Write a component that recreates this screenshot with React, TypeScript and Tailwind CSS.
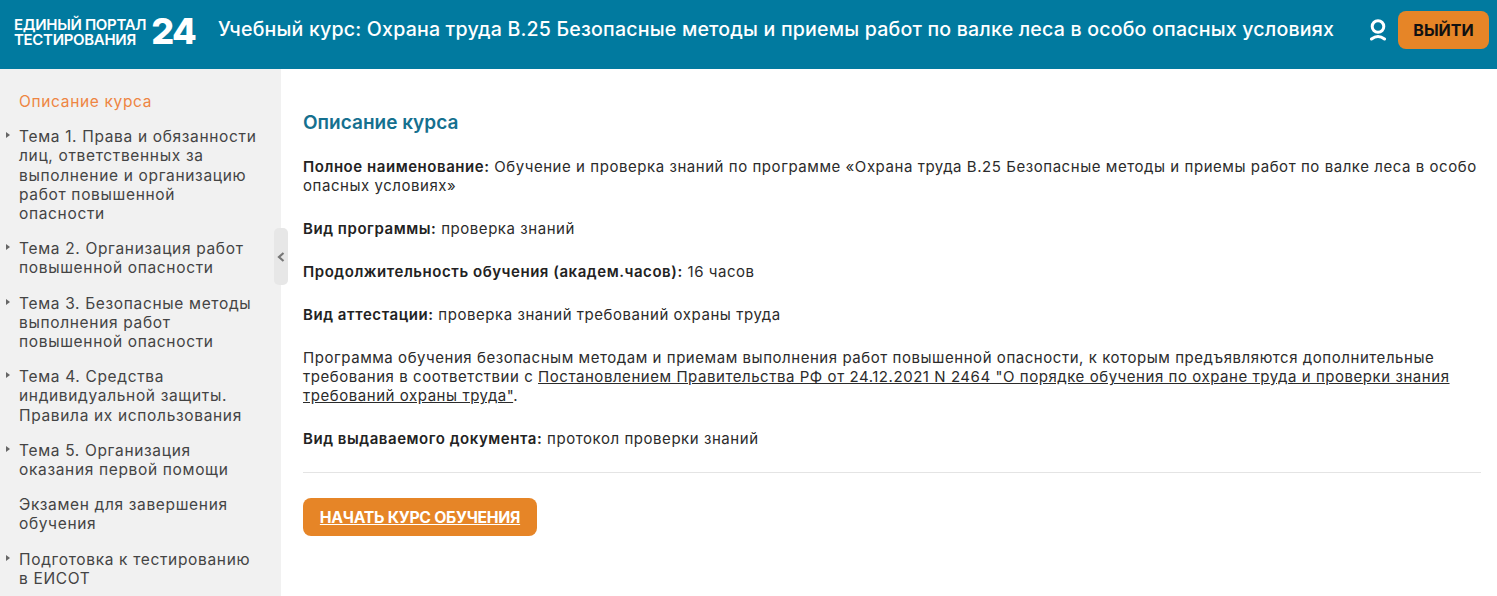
const topics: { text: string[]; arrow: boolean }[] = [
  { text: ["Тема 1. Права и обязанности", "лиц, ответственных за", "выполнение и организацию", "работ повышенной", "опасности"], arrow: true },
  { text: ["Тема 2. Организация работ", "повышенной опасности"], arrow: true },
  { text: ["Тема 3. Безопасные методы", "выполнения работ", "повышенной опасности"], arrow: true },
  { text: ["Тема 4. Средства", "индивидуальной защиты.", "Правила их использования"], arrow: true },
  { text: ["Тема 5. Организация", "оказания первой помощи"], arrow: true },
  { text: ["Экзамен для завершения", "обучения"], arrow: false },
  { text: ["Подготовка к тестированию", "в ЕИСОТ"], arrow: true },
];

const sans = "font-['Inter','Liberation_Sans',sans-serif]";

export default function App() {
  return (
    <div className={`h-[596px] w-[1497px] overflow-hidden bg-white ${sans}`}>
      <header className="flex h-[69px] items-center bg-[#017a9f] pb-[9px] text-white">
        <div className="ml-[14px] flex w-[204px] shrink-0 items-center">
          <div className="mt-[3px] whitespace-nowrap text-[15px] font-semibold uppercase leading-[15px] tracking-[-0.32px]">
            <div>Единый портал</div>
            <div>Тестирования</div>
          </div>
          <div className="ml-[5px] mt-[2px] text-[36px] font-extrabold leading-none tracking-[-1.5px]">24</div>
        </div>
        <h1 className="whitespace-nowrap text-[19.6px] font-medium leading-none tracking-[0.18px]">
          Учебный курс: Охрана труда В.25 Безопасные методы и приемы работ по валке леса в особо опасных условиях
        </h1>
        <svg className="ml-auto mr-[11px]" width="18" height="22" viewBox="0 0 18 22" fill="none" stroke="white" strokeWidth="3">
          <circle cx="9" cy="7.5" r="5.8" />
          <path d="M2.5 20Q9 15 15.5 20" strokeLinecap="round" />
        </svg>
        <button className="mr-[8px] h-[38px] w-[91px] rounded-[8px] bg-[#e68527] text-[16px] font-bold text-[#111]">ВЫЙТИ</button>
      </header>
      <div className="flex h-[527px]">
        <aside className="relative w-[281px] shrink-0 bg-[#f1f1f1] pl-[19px] pt-[23px] text-[15.5px] leading-[19.2px] tracking-[0.66px] text-[#444]">
          <div className="text-[#ee8542]">Описание курса</div>
          {topics.map((t) => (
            <div key={t.text[0]} className="relative mt-[16px]">
              {t.arrow && (
                <span className="absolute left-[-13px] top-[5px] h-0 w-0 border-y-[3.5px] border-l-[4px] border-y-transparent border-l-[#666]" />
              )}
              {t.text.map((l) => (
                <div key={l} className="whitespace-nowrap">{l}</div>
              ))}
            </div>
          ))}
          <div className="absolute left-[274px] top-[159px] flex h-[57px] w-[14px] items-center justify-center rounded-[5px] bg-[#e7e7e7]">
            <svg width="8" height="10" viewBox="0 0 8 10" fill="none" stroke="#777" strokeWidth="2.2">
              <path d="M6.5 1L2 5L6.5 9" />
            </svg>
          </div>
        </aside>
        <main className="flex-1 pl-[22px] pr-[16px] pt-[42px] text-[15px] leading-[19px] tracking-[0.55px] text-[#2b2b2b]">
          <h2 className="text-[19px] font-semibold leading-[24px] tracking-normal text-[#15708f]">Описание курса</h2>
          <p className="mt-[22px]"><b className="font-semibold text-[#222]">Полное наименование:</b> Обучение и проверка знаний по программе «Охрана труда В.25 Безопасные методы и приемы работ по валке леса в особо опасных условиях»</p>
          <p className="mt-[24px]"><b className="font-semibold text-[#222]">Вид программы:</b> проверка знаний</p>
          <p className="mt-[24px]"><b className="font-semibold text-[#222]">Продолжительность обучения (академ.часов):</b> 16 часов</p>
          <p className="mt-[24px]"><b className="font-semibold text-[#222]">Вид аттестации:</b> проверка знаний требований охраны труда</p>
          <p className="mt-[24px]">Программа обучения безопасным методам и приемам выполнения работ повышенной опасности, к которым предъявляются дополнительные требования в соответствии с <a className="underline" href="#">Постановлением Правительства РФ от 24.12.2021 N 2464 "О порядке обучения по охране труда и проверки знания требований охраны труда"</a>.</p>
          <p className="mt-[24px]"><b className="font-semibold text-[#222]">Вид выдаваемого документа:</b> протокол проверки знаний</p>
          <hr className="mt-[24px] border-[#e4e4e4]" />
          <button className="mt-[25px] h-[38px] w-[234px] rounded-[8px] bg-[#e68527] text-[15.8px] font-bold tracking-[-0.3px] text-white underline">НАЧАТЬ КУРС ОБУЧЕНИЯ</button>
        </main>
      </div>
    </div>
  );
}
